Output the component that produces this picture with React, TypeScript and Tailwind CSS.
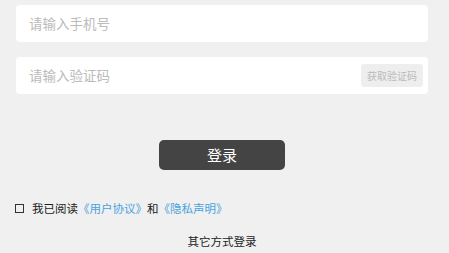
export default function App() {
  return (
    <div
      className="w-full h-[253px] bg-[#f0f0f0] overflow-hidden"
      style={{ fontFamily: '"Noto Sans CJK SC", "Noto Sans", sans-serif' }}
    >
      <div className="ml-4 mr-[21px] pt-[5px] flex flex-col">
        <div className="h-[37px] bg-white rounded-[4px] flex items-center pl-[13px]">
          <span className="text-[13.5px] text-[#bbbbbb]">请输入手机号</span>
        </div>

        <div className="mt-[15px] h-[37px] bg-white rounded-[4px] flex items-center justify-between pl-[13px] pr-[5px]">
          <span className="text-[13.5px] text-[#bbbbbb]">请输入验证码</span>
          <button className="h-[23px] w-[62px] rounded-[3px] bg-[#eeeeee] text-[10px] text-[#bbbbbb] flex items-center justify-center">
            获取验证码
          </button>
        </div>

        <div className="mt-[46px] flex justify-center">
          <button className="h-[30px] w-[126px] rounded-[5px] bg-[#444444] text-white text-[15px] flex items-center justify-center">
            登录
          </button>
        </div>

        <div className="mt-[30px] -ml-[1px] flex items-center text-[11.5px] text-[#222222]">
          <span className="w-[9px] h-[9px] border border-[#333333]" />
          <span className="ml-[8px]">我已阅读</span>
          <span className="text-[#4aa3df]">《用户协议》</span>
          <span>和</span>
          <span className="text-[#4aa3df]">《隐私声明》</span>
        </div>

        <div className="mt-[16px] flex justify-center text-[11.5px] text-[#222222]">
          其它方式登录
        </div>
      </div>
    </div>
  );
}
